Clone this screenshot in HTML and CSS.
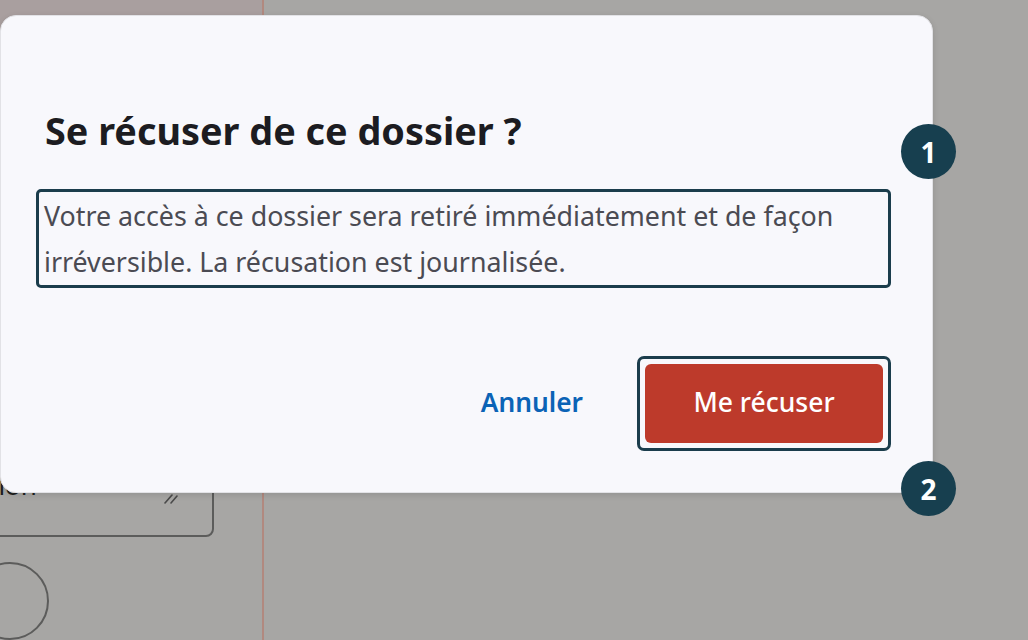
FILE: index.html
```html
<!DOCTYPE html>
<html lang="fr">
<head>
  <meta charset="UTF-8" />
  <meta name="viewport" content="width=device-width, initial-scale=1.0"/>
  <title>Se récuser de ce dossier</title>
  <link rel="stylesheet" href="styles.css">
</head>
<body>

  <!-- page behind the scrim -->
  <div class="page">
    <aside class="side">
      <div class="side-head"></div>
      <div class="side-body">
        <div class="note-field">
          <span class="note-text">Motif de récusation</span>
          <svg class="grip" viewBox="0 0 14 12" aria-hidden="true">
            <line x1="1" y1="11" x2="8" y2="3" />
            <line x1="7" y1="11" x2="13" y2="4" />
          </svg>
        </div>
        <div class="round-btn"></div>
      </div>
    </aside>
    <main class="main"></main>
  </div>

  <!-- Recusal dialog -->
  <div class="dialog" role="dialog" aria-labelledby="dlg-title">
    <h2 id="dlg-title" class="dialog-title">Se récuser de ce dossier ?</h2>
    <p class="dialog-text">Votre accès à ce dossier sera retiré immédiatement et de façon irréversible. La récusation est journalisée.</p>
    <div class="dialog-actions">
      <button class="btn-link">Annuler</button>
      <span class="focus-ring"><button class="btn-danger">Me récuser</button></span>
    </div>
  </div>

  <!-- annotation markers -->
  <span class="badge badge-one">1</span>
  <span class="badge badge-two">2</span>

</body>
</html>
```

FILE: styles.css
```css
* {
  box-sizing: border-box;
}

html, body {
  margin: 0;
  padding: 0;
  width: 1028px;
  height: 640px;
  overflow: hidden;
}

body {
  position: relative;
  background: #a7a6a4;
  font-family: "Noto Sans", "Open Sans", sans-serif;
}

/* ---- background page ---- */
.page {
  display: flex;
  height: 640px;
}

.side {
  width: 264px;
  border-right: 2px solid #b1897f;
  display: flex;
  flex-direction: column;
}

.side-head {
  height: 120px;
  background: #a99f9f;
}

.side-body {
  flex: 1;
  padding-top: 320px;
  display: flex;
  flex-direction: column;
  gap: 25px;
}

.note-field {
  width: 254px;
  height: 99px;
  margin-left: -40px;
  border: 2px solid #5c5c5b;
  border-radius: 8px;
  display: flex;
  align-items: flex-end;
  justify-content: space-between;
  padding: 0 34px 31px 0;
}

.note-text {
  font-size: 26px;
  color: #1e1e1e;
  line-height: 1;
  white-space: nowrap;
  margin-bottom: 6px;
  margin-left: -162px;
}

.grip {
  width: 14px;
  height: 12px;
  stroke: #4a4a4a;
  stroke-width: 1.6;
  stroke-linecap: round;
}

.round-btn {
  width: 78px;
  height: 78px;
  margin-left: -29px;
  border: 2px solid #5c5c5b;
  border-radius: 50%;
}

.main {
  flex: 1;
}

/* ---- dialog ---- */
.dialog {
  position: absolute;
  left: 0;
  top: 15px;
  width: 933px;
  height: 478px;
  background: #f8f8fc;
  border: 1px solid #e2e2e6;
  border-radius: 16px;
  box-shadow: 0 2px 6px rgba(0, 0, 0, 0.12);
  padding: 92px 41px 40px 35px;
  display: flex;
  flex-direction: column;
}

.dialog-title {
  margin: 0 0 35px 9px;
  font-size: 37.8px;
  font-weight: 700;
  line-height: 46px;
  color: #1c1c21;
}

.dialog-text {
  margin: 0;
  border: 3px solid #1b3d4c;
  border-radius: 5px;
  padding: 1px 5px 0;
  font-size: 26.8px;
  line-height: 46px;
  color: #4b4b53;
}

.dialog-actions {
  margin-top: auto;
  display: flex;
  justify-content: flex-end;
  align-items: center;
  gap: 54px;
}

.btn-link {
  border: 0;
  background: none;
  padding: 0 0 4px;
  font-family: inherit;
  font-size: 26.3px;
  font-weight: 600;
  color: #0b63b6;
}

.focus-ring {
  display: flex;
  padding: 5px;
  border: 3px solid #1b3d4c;
  border-radius: 7px;
  margin-bottom: 1px;
}

.btn-danger {
  width: 238px;
  height: 79px;
  border: 0;
  border-radius: 6px;
  background: #bd3a2b;
  color: #fff;
  font-family: inherit;
  font-size: 26.5px;
  font-weight: 500;
  padding: 0 0 4px;
}

/* ---- annotation markers ---- */
.badge {
  position: absolute;
  left: 901px;
  width: 55px;
  height: 55px;
  border-radius: 50%;
  background: #173f4f;
  color: #fff;
  font-size: 28px;
  font-weight: 700;
  display: flex;
  align-items: center;
  justify-content: center;
}

.badge-one {
  top: 124px;
}

.badge-two {
  top: 461px;
}
```
